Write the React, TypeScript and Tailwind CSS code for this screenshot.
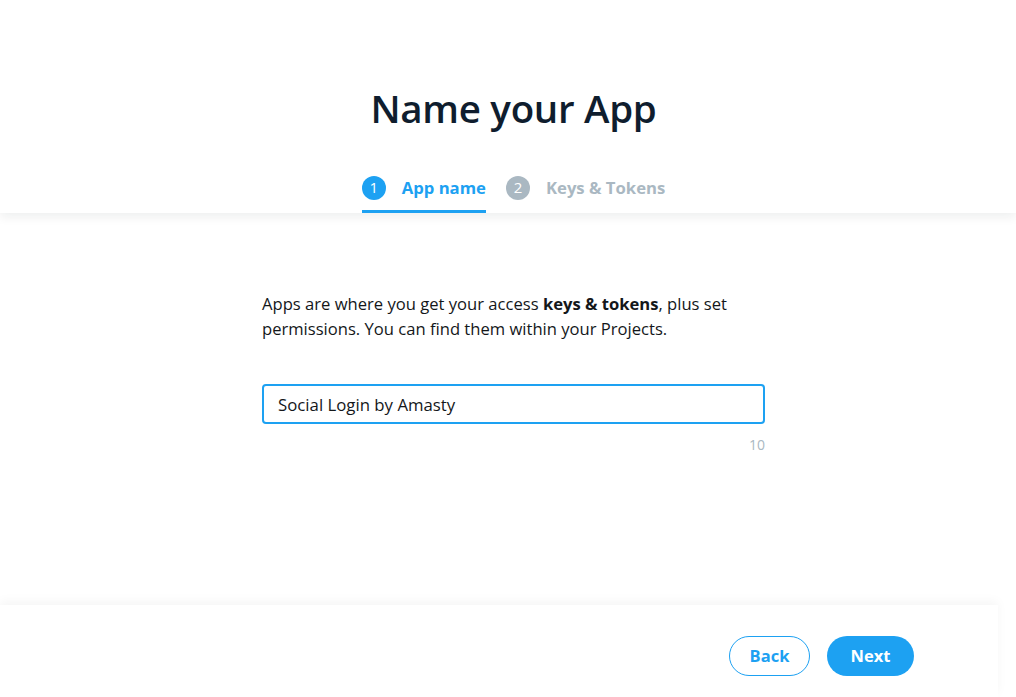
import { useState } from 'react';

const STEPS = [
  { n: 1, label: 'App name', active: true },
  { n: 2, label: 'Keys & Tokens', active: false },
];

export default function App() {
  const [name, setName] = useState('Social Login by Amasty');

  return (
    <div
      className="w-full h-[697px] bg-white flex flex-col overflow-hidden text-[#14171a]"
      style={{ fontFamily: '"Open Sans", "Noto Sans", sans-serif' }}
    >
      {/* Header: title + step tabs */}
      <div className="relative z-10 h-[213px] shrink-0 bg-white shadow-[0_4px_10px_rgba(20,23,26,0.07)] flex flex-col items-center pl-[11px]">
        <h1 className="mt-[84px] text-[38.5px] leading-[48px] font-semibold text-[#0f1d2e] tracking-[-0.3px]">
          Name your App
        </h1>
        <div className="mt-[27px] flex gap-5">
          {STEPS.map((s) => (
            <div
              key={s.n}
              className={`flex items-center gap-4 h-[54px] pt-[6px] border-b-[3px] ${
                s.active ? 'border-[#1da1f2]' : 'border-transparent'
              }`}
            >
              <span
                className={`size-6 rounded-full flex items-center justify-center text-white text-[15px] ${
                  s.active ? 'bg-[#1da1f2]' : 'bg-[#aab8c2]'
                }`}
              >
                {s.n}
              </span>
              <span
                className={`text-[16.7px] font-bold ${s.active ? 'text-[#1da1f2]' : 'text-[#aab8c2]'}`}
              >
                {s.label}
              </span>
            </div>
          ))}
        </div>
      </div>

      {/* Body */}
      <div className="flex-1 flex justify-center">
        <div className="w-[503px] ml-[11px] pt-[78px]">
          <p className="text-[16.6px] leading-[25px] text-[#14171a]">
            Apps are where you get your access <b className="font-bold">keys &amp; tokens</b>, plus set
            permissions. You can find them within your Projects.
          </p>
          <input
            value={name}
            onChange={(e) => setName(e.target.value)}
            className="mt-[43px] w-full h-[40px] rounded-[4px] border-2 border-[#1da1f2] px-[14px] text-[16.8px] text-[#14171a] outline-none"
          />
          <div className="mt-[10px] text-right text-[14px] text-[#aab8c2]">10</div>
        </div>
      </div>

      {/* Footer */}
      <div className="h-[92px] shrink-0 w-[998px] bg-white shadow-[0_-4px_10px_rgba(20,23,26,0.04)] flex items-start justify-end gap-[17px] pt-[31px] pr-[84px]">
        <button
          type="button"
          className="h-[40px] w-[81px] rounded-full border border-[#1da1f2] text-[#1da1f2] text-[16.5px] font-bold"
        >
          Back
        </button>
        <button
          type="button"
          className="h-[40px] w-[87px] rounded-full bg-[#1da1f2] text-white text-[16.5px] font-bold"
        >
          Next
        </button>
      </div>
    </div>
  );
}
